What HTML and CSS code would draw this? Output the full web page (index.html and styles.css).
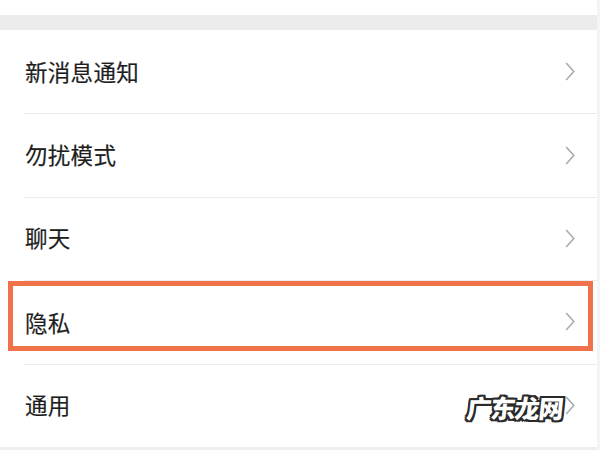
FILE: index.html
```html
<!DOCTYPE html>
<html lang="zh-CN">
<head>
    <meta charset="UTF-8">
    <meta name="viewport" content="width=device-width, initial-scale=1.0">
    <title>设置</title>
    <link rel="stylesheet" href="styles.css">
</head>
<body>
    <div class="page">
        <div class="top-gap"></div>
        <ul class="settings">
            <li class="item">
                <span class="label">新消息通知</span>
                <svg class="arrow" viewBox="0 0 10 20"><path d="M1 1 L9 10 L1 19"/></svg>
            </li>
            <li class="item">
                <span class="label">勿扰模式</span>
                <svg class="arrow" viewBox="0 0 10 20"><path d="M1 1 L9 10 L1 19"/></svg>
            </li>
            <li class="item">
                <span class="label">聊天</span>
                <svg class="arrow" viewBox="0 0 10 20"><path d="M1 1 L9 10 L1 19"/></svg>
            </li>
            <li class="item highlighted">
                <span class="label">隐私</span>
                <svg class="arrow" viewBox="0 0 10 20"><path d="M1 1 L9 10 L1 19"/></svg>
                <div class="mark-box"></div>
            </li>
            <li class="item">
                <span class="label">通用</span>
                <svg class="arrow" viewBox="0 0 10 20"><path d="M1 1 L9 10 L1 19"/></svg>
                <div class="watermark">广东龙网</div>
            </li>
        </ul>
    </div>
</body>
</html>
```

FILE: styles.css
```css
* {
    box-sizing: border-box;
}
body {
    margin: 0;
    background-color: #fff;
    font-family: "Noto Sans CJK SC", "Noto Sans", sans-serif;
    color: #1e1e1e;
}
.page {
    width: 600px;
    height: 450px;
    overflow: hidden;
    border-right: 3px solid #f4f4f4;
}
.top-gap {
    height: 30px;
    border-top: 15px solid #fff;
    background-color: #ececec;
}
.settings {
    list-style: none;
    margin: 0;
    padding: 0;
    border-bottom: 4px solid #eeeeee;
}
.item {
    position: relative;
    display: flex;
    align-items: center;
    justify-content: space-between;
    height: 83.4px;
    padding: 0 22px 0 24px;
}
.item + .item::before {
    content: "";
    position: absolute;
    top: 0;
    left: 24px;
    right: 0;
    height: 1px;
    background-color: #ececec;
}
.label {
    font-size: 22.5px;
    letter-spacing: 0.3px;
    padding-left: 1px;
    padding-bottom: 2px;
    -webkit-text-stroke: 0.2px #1e1e1e;
}
.arrow {
    width: 10px;
    height: 19px;
    fill: none;
    stroke: #a9a9a9;
    stroke-width: 1.6;
}
.highlighted .label {
    padding-top: 2px;
}
.mark-box {
    position: absolute;
    top: 1px;
    left: 8px;
    width: 585px;
    height: 70px;
    border: 5px solid #f1714a;
}
.watermark {
    position: absolute;
    left: 467px;
    top: 25px;
    font-size: 25px;
    font-weight: 900;
    color: #fff;
    letter-spacing: -1px;
    transform: skewX(-6deg);
    text-shadow:
        -2px -2px 0 #2a2a2a, 2px -2px 0 #2a2a2a,
        -2px 2px 0 #2a2a2a, 2px 2px 0 #2a2a2a,
        0 -2px 0 #2a2a2a, 0 2px 0 #2a2a2a,
        -2px 0 0 #2a2a2a, 2px 0 0 #2a2a2a;
}
```
